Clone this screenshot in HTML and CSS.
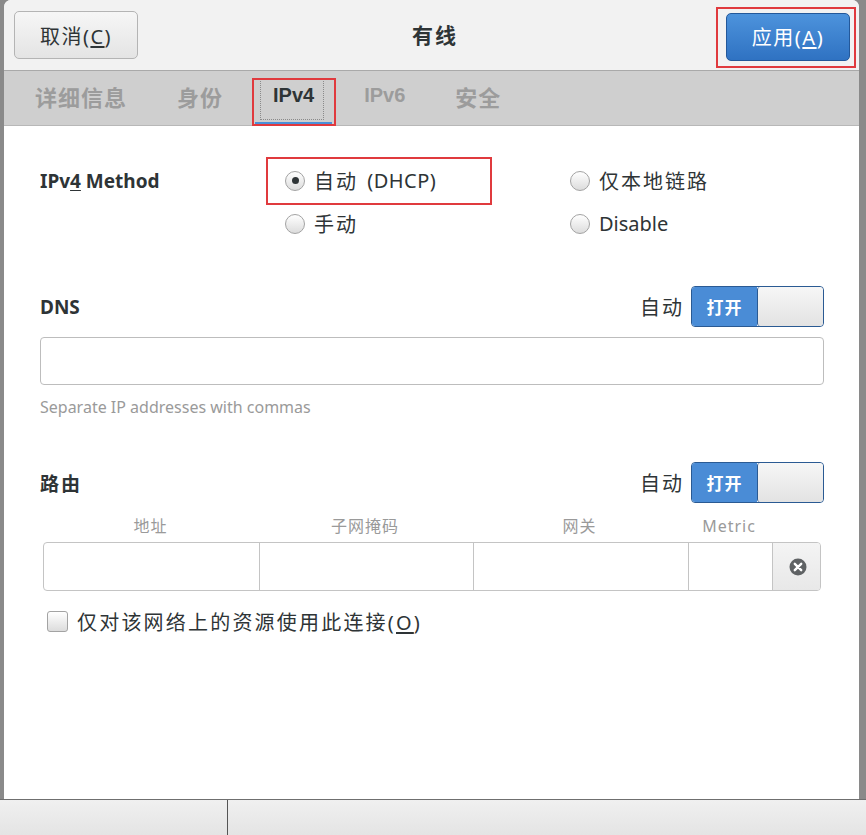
FILE: index.html
```html
<!DOCTYPE html>
<html lang="zh-CN">
<head>
  <meta charset="UTF-8" />
  <title>有线</title>
  <link rel="stylesheet" href="styles.css">
</head>
<body>
  <div class="screen">
    <div class="dialog">

      <div class="header">
        <button class="btn btn-cancel">取消(<u>C</u>)</button>
        <div class="title">有线</div>
        <span class="mark mark-apply">
          <button class="btn btn-apply">应用(<u>A</u>)</button>
        </span>
      </div>

      <div class="tabs">
        <div class="tab cjk">详细信息</div>
        <div class="tab cjk">身份</div>
        <div class="tab active">IPv4</div>
        <div class="tab">IPv6</div>
        <div class="tab cjk">安全</div>
      </div>

      <div class="content">
        <div class="method">
          <div class="label">IPv<u>4</u> Method</div>
          <div class="radio-item marked"><span class="radio checked"></span><span class="wide">自动</span>&nbsp;<span class="dhcp">(DHCP)</span></div>
          <div class="radio-item"><span class="radio"></span><span class="wide">仅本地链路</span></div>
          <div class="label"></div>
          <div class="radio-item"><span class="radio"></span><span class="wide">手动</span></div>
          <div class="radio-item"><span class="radio"></span><span>Disable</span></div>
        </div>

        <div class="section-row dns-row">
          <div class="label">DNS</div>
          <div class="auto">
            <span class="wide">自动</span>
            <div class="switch"><span class="on">打开</span><span class="knob"></span></div>
          </div>
        </div>
        <div class="text-input"></div>
        <div class="hint">Separate IP addresses with commas</div>

        <div class="section-row route-row">
          <div class="label wide">路由</div>
          <div class="auto">
            <span class="wide">自动</span>
            <div class="switch"><span class="on">打开</span><span class="knob"></span></div>
          </div>
        </div>

        <div class="routes">
          <div class="col-head">地址</div>
          <div class="col-head">子网掩码</div>
          <div class="col-head">网关</div>
          <div class="col-head">Metric</div>
          <div class="col-head"></div>
          <div class="route-row-box">
            <div class="cell"></div>
            <div class="cell"></div>
            <div class="cell"></div>
            <div class="cell"></div>
            <div class="cell remove">
              <svg width="18" height="18" viewBox="0 0 18 18">
                <circle cx="9" cy="9" r="8.5" fill="#5f6264"/>
                <path d="M5.8 5.8 L12.2 12.2 M12.2 5.8 L5.8 12.2" stroke="#ffffff" stroke-width="2.4" stroke-linecap="round"/>
              </svg>
            </div>
          </div>
        </div>

        <label class="check-row"><span class="checkbox"></span><span class="check-text">仅对该网络上的资源使用此连接(<u>O</u>)</span></label>
      </div>
    </div>

    <div class="statusbar">
      <div class="status-cell first"></div>
      <div class="status-cell"></div>
    </div>
  </div>
</body>
</html>
```

FILE: styles.css
```css
* {
  margin: 0;
  padding: 0;
  box-sizing: border-box;
}

body {
  background-color: #8a8a8a;
  font-family: 'Noto Sans', 'Noto Sans CJK SC', sans-serif;
  color: #2e3436;
}

u {
  text-decoration: underline;
  text-underline-offset: 2px;
}

.wide {
  letter-spacing: 2px;
}

.screen {
  height: 835px;
  display: flex;
  flex-direction: column;
}

.dialog {
  height: 799px;
  margin: 0 7px 0 4px;
  background-color: #ffffff;
  border-radius: 7px 7px 0 0;
  display: flex;
  flex-direction: column;
  overflow: hidden;
}

/* header */
.header {
  height: 71px;
  flex: none;
  display: grid;
  grid-template-columns: 1fr auto 1fr;
  align-items: center;
  padding: 0 3px 0 10px;
  background-color: #f2f2f2;
  border-bottom: 1px solid #a9a9a9;
}
.title {
  font-size: 21px;
  font-weight: bold;
  letter-spacing: 2px;
  color: #2e3436;
  padding-bottom: 2px;
}
.btn {
  width: 124px;
  height: 48px;
  border-radius: 5px;
  font-family: 'Noto Sans', 'Noto Sans CJK SC', sans-serif;
  font-size: 20px;
  letter-spacing: 1.5px;
  cursor: pointer;
}
.btn-cancel {
  justify-self: start;
  background: linear-gradient(#f6f6f6, #e4e4e4);
  border: 1px solid #b4b4b4;
  color: #2e3436;
}
.btn-apply {
  background: linear-gradient(#4d93dc, #2f72c2);
  border: 1px solid #23589a;
  color: #ffffff;
}
.mark-apply {
  justify-self: end;
  display: block;
  border: 2px solid #e03a3e;
  padding: 4px 4px 5px 8px;
  margin-top: 4px;
}
.mark-apply .btn {
  display: block;
}

/* tabs */
.tabs {
  height: 55px;
  flex: none;
  display: flex;
  gap: 14px;
  padding-left: 13px;
  background-color: #cfcfcf;
  border-bottom: 1px solid #b8b8b8;
}
.tab {
  position: relative;
  padding: 0 18px 2px;
  display: flex;
  align-items: center;
  font-family: 'Liberation Sans', 'Noto Sans CJK SC', sans-serif;
  font-size: 20px;
  font-weight: bold;
  color: #9c9c9c;
  border-bottom: 3px solid transparent;
}
.tab.cjk {
  font-size: 22px;
  letter-spacing: 1px;
}
.tab.active {
  color: #2e3436;
  border-bottom-color: #4a90d9;
}
.tab.active::before {
  content: '';
  position: absolute;
  left: 5px;
  right: 8px;
  top: 7px;
  bottom: 2px;
  border: 1px dotted #8a8a8a;
}
.tab.active::after {
  content: '';
  position: absolute;
  left: -3px;
  right: -4px;
  top: 7px;
  bottom: -4px;
  border: 2px solid #e03a3e;
}

/* content */
.content {
  padding: 33px 35px 0 36px;
}
.label {
  font-size: 19px;
  font-weight: bold;
  color: #2e3436;
}

.method {
  display: grid;
  grid-template-columns: 245px 285px 1fr;
  grid-auto-rows: 43px;
  align-items: center;
}
.radio-item {
  position: relative;
  display: flex;
  align-items: center;
  height: 43px;
  font-size: 20px;
  color: #2e3436;
  white-space: pre;
}
.radio-item .dhcp {
  padding-left: 4px;
  letter-spacing: 0.5px;
}
.radio-item.marked::after {
  content: '';
  position: absolute;
  left: -19px;
  top: -2px;
  width: 222px;
  height: 44px;
  border: 2px solid #e03a3e;
}
.radio {
  width: 20px;
  height: 20px;
  margin-right: 9px;
  border-radius: 50%;
  border: 1px solid #a3a3a3;
  background: linear-gradient(#ffffff, #dcdcdc);
  display: flex;
  align-items: center;
  justify-content: center;
}
.radio.checked::after {
  content: '';
  width: 7px;
  height: 7px;
  border-radius: 50%;
  background-color: #2e3436;
}

.section-row {
  display: flex;
  justify-content: space-between;
  align-items: center;
  height: 41px;
}
.dns-row {
  margin-top: 41px;
}
.route-row {
  margin-top: 45px;
}
.auto {
  display: flex;
  align-items: center;
  gap: 7px;
  font-size: 20px;
}
.switch {
  width: 133px;
  height: 41px;
  display: flex;
  border: 1px solid #2a5a93;
  border-radius: 4px;
  overflow: hidden;
}
.switch .on {
  width: 65px;
  display: flex;
  align-items: center;
  justify-content: center;
  background-color: #4a8cd6;
  color: #ffffff;
  font-size: 17px;
  font-weight: bold;
  letter-spacing: 1px;
}
.switch .knob {
  flex: 1;
  background: linear-gradient(#f6f6f6, #e3e3e3);
  border-left: 1px solid #2a5a93;
  border-radius: 3px;
}

.text-input {
  height: 48px;
  margin-top: 10px;
  border: 1px solid #bdbdbd;
  border-radius: 4px;
  background-color: #ffffff;
}
.hint {
  margin-top: 12px;
  font-size: 16px;
  line-height: 20px;
  color: #9a9a9a;
}

.routes {
  display: grid;
  grid-template-columns: 215px 214px 215px 84px 50px;
  margin: 13px 3px 0 3px;
}
.col-head {
  text-align: center;
  font-size: 16px;
  line-height: 20px;
  letter-spacing: 1px;
  color: #9a9a9a;
  padding-bottom: 6px;
}
.route-row-box {
  grid-column: 1 / -1;
  display: grid;
  grid-template-columns: 215px 214px 215px 84px 50px;
  height: 49px;
  border: 1px solid #c4c4c4;
  border-radius: 4px;
  overflow: hidden;
}
.cell {
  border-left: 1px solid #c4c4c4;
}
.cell:first-child {
  border-left: none;
}
.cell.remove {
  display: flex;
  align-items: center;
  justify-content: center;
  background: linear-gradient(#f4f4f4, #e8e8e8);
}

.check-row {
  display: flex;
  align-items: center;
  gap: 9px;
  margin: 15px 0 0 7px;
  height: 30px;
  font-size: 20px;
  color: #2e3436;
}
.check-text {
  letter-spacing: 2.2px;
}
.checkbox {
  width: 21px;
  height: 21px;
  border: 1px solid #a3a3a3;
  border-radius: 3px;
  background: linear-gradient(#ffffff, #dcdcdc);
}

/* bottom strip */
.statusbar {
  height: 36px;
  display: flex;
  border-top: 1px solid #6f6f6f;
  background: linear-gradient(#f0f0f0, #e4e4e4);
}
.status-cell.first {
  width: 228px;
  border-right: 1px solid #555555;
}
```
